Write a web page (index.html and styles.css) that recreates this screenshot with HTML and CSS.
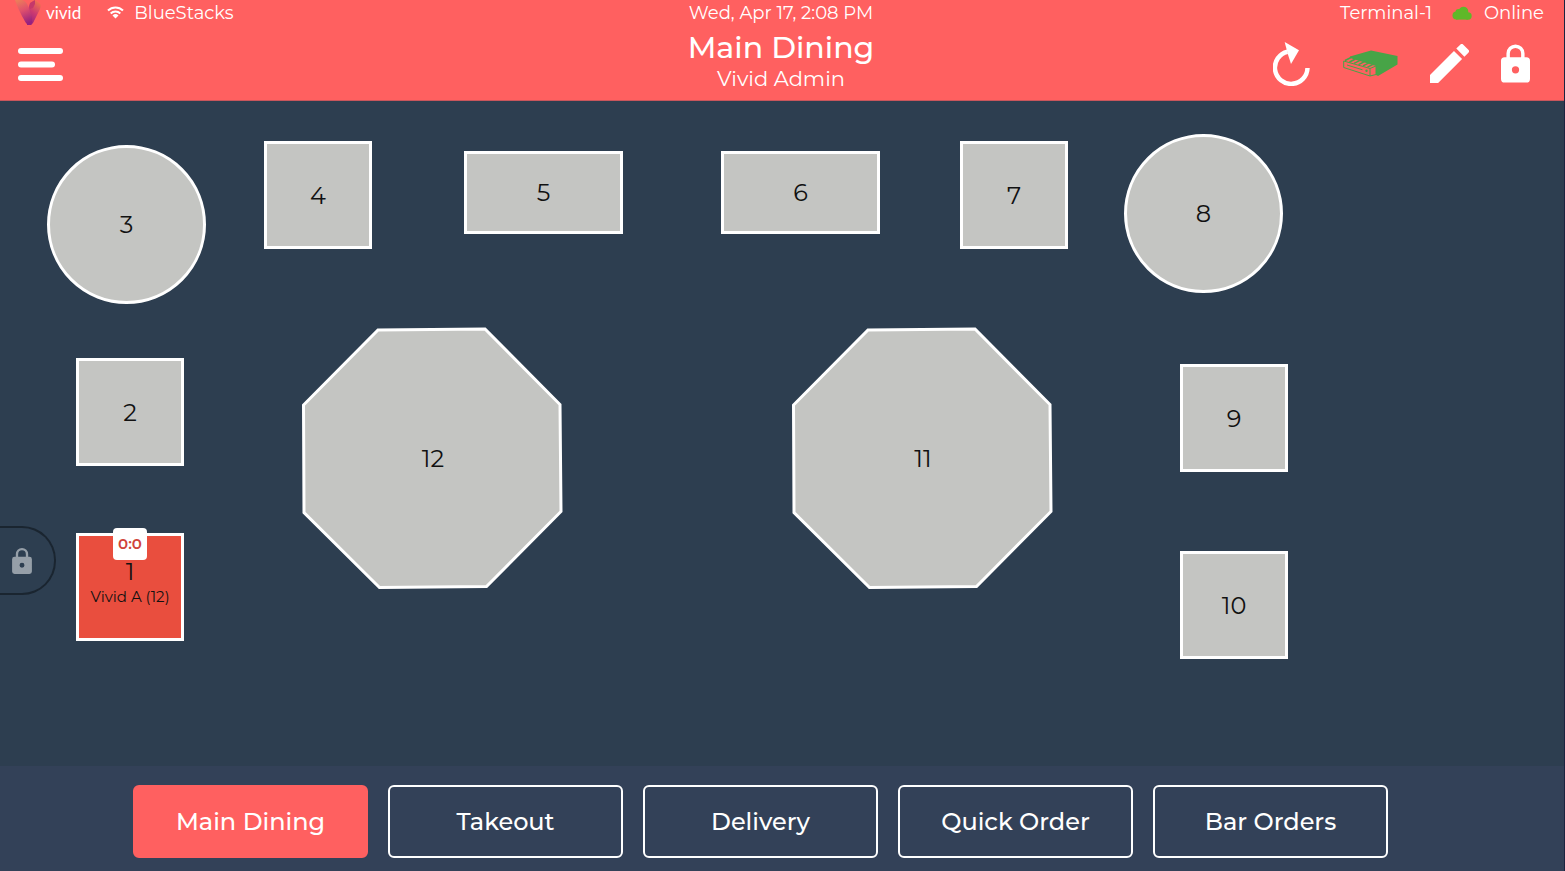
FILE: index.html
```html
<!DOCTYPE html>
<html lang="en">
<head>
    <meta charset="UTF-8">
    <meta name="viewport" content="width=device-width, initial-scale=1.0">
    <title>Main Dining</title>

    <link rel="stylesheet" href="styles.css">
</head>
<body>
    <header class="header">
        <div class="status status-left">
            <div class="logo">
                <svg width="27" height="26" viewBox="0 0 27 26" aria-hidden="true">
                    <defs>
                        <linearGradient id="logoLeft" x1="0.2" y1="0" x2="0.5" y2="1">
                            <stop offset="0" stop-color="#ec7d5a"/>
                            <stop offset="0.45" stop-color="#e0506c"/>
                            <stop offset="1" stop-color="#96207f"/>
                        </linearGradient>
                        <linearGradient id="logoRight" x1="0.7" y1="0" x2="0.3" y2="1">
                            <stop offset="0" stop-color="#f0744f"/>
                            <stop offset="0.5" stop-color="#cc3a70"/>
                            <stop offset="1" stop-color="#96207f"/>
                        </linearGradient>
                    </defs>
                    <path d="M20 0l4 3c2 1 2 3 1 6l-7 14-2 2h-4V12l2-6c1-3 3-5 6-6z" fill="url(#logoRight)"/>
                    <path d="M0 0h7c3 1 5 3 6 6l4 11v6l-1 2h-3l-2-2C8 18 3 9 0 0z" fill="url(#logoLeft)"/>
                    <path d="M20 0l-5 3-1 4 1 2 3-1 2-4z" fill="#c5386a"/>
                </svg>
                <span class="logo-text">vivid</span>
            </div>
            <svg class="wifi" width="17" height="13" viewBox="0 0 17 13" fill="none" stroke="#fff" stroke-width="2" aria-hidden="true">
                <path d="M1 4.500a10.600 10.600 0 0 1 15 0M3.700 7.500a6.800 6.800 0 0 1 9.600 0"/>
                <path d="M5.500 9.500a4.300 4.300 0 0 1 6 0l-3 3z" fill="#fff" stroke="none"/>
            </svg>
            <span>BlueStacks</span>
        </div>
        <div class="status status-center">Wed, Apr 17, 2:08 PM</div>
        <div class="status status-right">
            <span>Terminal-1</span>
            <svg class="cloud" width="20" height="14" viewBox="0 0 20 14" fill="#5fb829" aria-hidden="true">
                <circle cx="4.500" cy="9.500" r="4"/>
                <circle cx="6.500" cy="6" r="3"/>
                <circle cx="11.500" cy="5.500" r="4.800"/>
                <circle cx="16" cy="10" r="3.700"/>
                <rect x="4" y="8" width="12" height="5.600"/>
            </svg>
            <span>Online</span>
        </div>

        <div class="menu">
            <button class="icon-button" aria-label="Menu">
                <svg width="45" height="33" viewBox="0 0 45 33" fill="#fff">
                    <rect width="45" height="6" rx="3"/>
                    <rect y="13.500" width="37" height="6" rx="3"/>
                    <rect y="27" width="45" height="6" rx="3"/>
                </svg>
            </button>
        </div>
        <div class="title">
            <h1>Main Dining</h1>
            <p>Vivid Admin</p>
        </div>
        <div class="actions">
            <button class="icon-button" aria-label="Refresh">
                <svg width="38" height="44" viewBox="0 0 38 44">
                    <path d="M34.500 26A16.300 16.300 0 1 1 14.500 9.700" fill="none" stroke="#fff" stroke-width="4.500"/>
                    <path d="M11.700 0L26 8.300l-8 13.700-3.500-11z" fill="#fff"/>
                </svg>
            </button>
            <button class="icon-button" aria-label="Cash drawer">
                <svg width="55" height="27" viewBox="0 0 55 27">
                    <path d="M28 .5L54.500 6v8.500L35 26l-2-1v-9L7 8V6.500z" fill="#47a447"/>
                    <path d="M.7 11L27 18.500V26L.7 17.500zM27 18.500l6-2.500v8.500L27 26" fill="none" stroke="#47a447"/>
                    <path d="M2 10.500l6-3M6.500 12l6-3M11 13.300l6-3M15.500 14.600l6-3M20 15.900l6-3M24.500 17.200l6-3" stroke="#47a447" stroke-width="1.500"/>
                    <path d="M4 15L19.500 19.800" fill="none" stroke="#47a447"/>
                    <circle cx="23.500" cy="20.700" r="1.200" fill="#47a447"/>
                </svg>
            </button>
            <button class="icon-button" aria-label="Edit">
                <svg width="39" height="39" viewBox="3 3 18 18" fill="#fff">
                    <path d="M3 17.250V21h3.750L17.810 9.940l-3.750-3.750L3 17.250zM20.710 7.040a1 1 0 0 0 0-1.410l-2.340-2.340a1 1 0 0 0-1.410 0l-1.830 1.830 3.750 3.750 1.830-1.830z"/>
                </svg>
            </button>
            <button class="icon-button" aria-label="Lock">
                <svg width="29" height="39" viewBox="4 1 16 21" fill="#fff">
                    <path d="M18 8h-1V6A5 5 0 0 0 7 6v2H6a2 2 0 0 0-2 2v10a2 2 0 0 0 2 2h12a2 2 0 0 0 2-2V10a2 2 0 0 0-2-2zm-6 9a2 2 0 1 1 0-4 2 2 0 0 1 0 4zm3.100-9H8.900V6a3.100 3.100 0 0 1 6.200 0v2z"/>
                </svg>
            </button>
        </div>
    </header>

    <main class="floor">
        <button class="table square busy table-1">
            <span class="timer">0:0</span>
            <span>1</span>
            <span class="server">Vivid A (12)</span>
        </button>
        <button class="table square table-2">2</button>
        <button class="table circle table-3">3</button>
        <button class="table square table-4">4</button>
        <button class="table rect table-5">5</button>
        <button class="table rect table-6">6</button>
        <button class="table square table-7">7</button>
        <button class="table circle table-8">8</button>
        <button class="table square table-9">9</button>
        <button class="table square table-10">10</button>
        <button class="table octagon table-11">
            <svg viewBox="0 0 262 262" aria-hidden="true">
                <path d="M76 3L183 2l75 75.500 1 107-74.500 75-107 1L2 185.500 1.500 78z"/>
            </svg>
            <span>11</span>
        </button>
        <button class="table octagon table-12">
            <svg viewBox="0 0 262 262" aria-hidden="true">
                <path d="M76 3L183 2l75 75.500 1 107-74.500 75-107 1L2 185.500 1.500 78z"/>
            </svg>
            <span>12</span>
        </button>

        <button class="side-lock" aria-label="Lock floor plan">
            <svg width="20" height="26" viewBox="4 1 16 21" fill="#969fa8">
                <path d="M18 8h-1V6A5 5 0 0 0 7 6v2H6a2 2 0 0 0-2 2v10a2 2 0 0 0 2 2h12a2 2 0 0 0 2-2V10a2 2 0 0 0-2-2zm-6 9a2 2 0 1 1 0-4 2 2 0 0 1 0 4zm3.100-9H8.900V6a3.100 3.100 0 0 1 6.200 0v2z"/>
            </svg>
        </button>
    </main>

    <nav class="tabs">
        <button class="tab active">Main Dining</button>
        <button class="tab">Takeout</button>
        <button class="tab">Delivery</button>
        <button class="tab">Quick Order</button>
        <button class="tab">Bar Orders</button>
    </nav>
</body>
</html>
```

FILE: styles.css
```css
* {
    box-sizing: border-box;
}

body {
    font-family: Montserrat, Inter, sans-serif;
    background-color: #2d3e50;
    color: #fff;
    display: flex;
    flex-direction: column;
    min-height: 100vh;
    margin: 0;
    border-right: 1px solid #1c2340;
}

button {
    font-family: inherit;
    cursor: pointer;
}

svg {
    display: block;
    flex-shrink: 0;
}

/* Header */
.header {
    background-color: #ff6060;
    border-bottom: 1px solid #c9565c;
    display: grid;
    grid-template-columns: 1fr auto 1fr;
    grid-template-rows: 25px 75px;
    padding: 0 20px 0 18px;
}

.status {
    display: flex;
    align-items: center;
    font-size: 18px;
    font-weight: 400;
    white-space: nowrap;
}

.status-center {
    justify-content: center;
}

.status-right {
    justify-content: flex-end;
}

.logo {
    display: flex;
    align-items: center;
    gap: 4px;
    margin-left: -3px;
}

.logo-text {
    font-family: Lato, sans-serif;
    font-size: 17px;
    font-weight: 400;
}

.wifi {
    margin: 0 10px 0 26px;
}

.cloud {
    margin: 0 12px 0 20px;
}

.menu {
    padding-top: 23px;
}

.icon-button {
    background: none;
    border: none;
    padding: 0;
}

.title {
    text-align: center;
}

.title h1 {
    font-size: 30px;
    font-weight: 500;
    line-height: 40px;
    margin: 3px 0 0;
}

.title p {
    font-size: 21px;
    font-weight: 400;
    line-height: 22px;
    margin: 0;
}

.actions {
    display: flex;
    align-items: center;
    justify-content: flex-end;
    gap: 32px;
    padding: 2px 14px 0 0;
}

/* Floor plan */
.floor {
    position: relative;
    flex: 1;
    min-height: 600px;
}

.table {
    position: absolute;
    display: flex;
    flex-direction: column;
    align-items: center;
    justify-content: center;
    background-color: #c4c5c2;
    border: 3px solid #fff;
    color: #111;
    font-size: 24px;
    font-weight: 400;
    padding: 0;
}

.square {
    width: 108px;
    height: 108px;
}

.rect {
    width: 159px;
    height: 83px;
}

.circle {
    width: 159px;
    height: 159px;
    border-radius: 50%;
}

.octagon {
    width: 262px;
    height: 262px;
    background: none;
    border: none;
}

.octagon svg {
    position: absolute;
    inset: 0;
    fill: #c4c5c2;
    stroke: #fff;
    stroke-width: 3;
}

.octagon span {
    position: relative;
}

.busy {
    background-color: #e94e3e;
    line-height: 28px;
    padding-bottom: 8px;
}

.timer {
    position: absolute;
    top: -8px;
    background-color: #fff;
    border-radius: 4px;
    color: #d0433a;
    font-size: 15px;
    font-weight: 600;
    line-height: 32px;
    width: 34px;
}

.server {
    font-size: 15px;
    line-height: 22px;
}

.table-1 { left: 76px; top: 432px; }
.table-2 { left: 76px; top: 257px; }
.table-3 { left: 47px; top: 44px; }
.table-4 { left: 264px; top: 40px; }
.table-5 { left: 464px; top: 50px; }
.table-6 { left: 721px; top: 50px; }
.table-7 { left: 960px; top: 40px; }
.table-8 { left: 1124px; top: 33px; }
.table-9 { left: 1180px; top: 263px; }
.table-10 { left: 1180px; top: 450px; }
.table-11 { left: 792px; top: 226px; }
.table-12 { left: 302px; top: 226px; }

.side-lock {
    position: absolute;
    left: 0;
    top: 425px;
    width: 56px;
    height: 69px;
    background: none;
    border: 2px solid #1a2530;
    border-left: none;
    border-radius: 0 34px 34px 0;
    padding: 0 0 0 12px;
}

/* Bottom tabs */
.tabs {
    background-color: #334158;
    display: flex;
    justify-content: center;
    gap: 20px;
    padding: 19px 43px 13px 0;
}

.tab {
    flex: 0 1 235px;
    height: 73px;
    background: none;
    border: 2px solid #fff;
    border-radius: 6px;
    color: #fff;
    font-size: 24px;
    font-weight: 500;
}

.tab.active {
    background-color: #ff6060;
    border-color: #ff6060;
}
```
